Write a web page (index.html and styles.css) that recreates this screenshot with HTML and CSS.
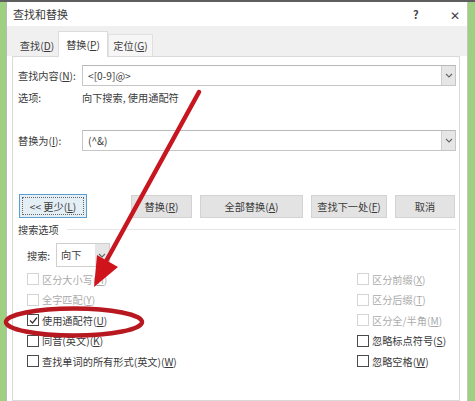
FILE: index.html
```html
<!DOCTYPE html>
<html>
<head>
<meta charset="utf-8">
<link rel="stylesheet" href="styles.css">
</head>
<body>
<div class="screen">
  <div class="dialog">
    <div class="titlebar">
      <span class="title">查找和替换</span>
      <span class="help">?</span>
      <span class="close">✕</span>
    </div>
    <div class="tabstrip">
      <div class="tab first">查找(<u>D</u>)</div>
      <div class="tab active">替换(<u>P</u>)</div>
      <div class="tab third">定位(<u>G</u>)</div>
    </div>
    <div class="panel">
      <div class="row field-row">
        <span class="label">查找内容(<u>N</u>):</span>
        <div class="combo">
          <span class="combo-text">&lt;[0-9]@&gt;</span>
          <span class="combo-btn"><svg width="8" height="5" viewBox="0 0 8 5"><path d="M1 1 L4 4 L7 1" fill="none" stroke="#666" stroke-width="1.1"/></svg></span>
        </div>
      </div>
      <div class="row opt-row">
        <span class="label">选项:</span>
        <span class="opt-value">向下搜索, 使用通配符</span>
      </div>
      <div class="row field-row replace-row">
        <span class="label">替换为(<u>I</u>):</span>
        <div class="combo">
          <span class="combo-text">(^&amp;)</span>
          <span class="combo-btn"><svg width="8" height="5" viewBox="0 0 8 5"><path d="M1 1 L4 4 L7 1" fill="none" stroke="#666" stroke-width="1.1"/></svg></span>
        </div>
      </div>
      <div class="buttons">
        <div class="btn btn-less"><span class="focus">&lt;&lt; 更少(<u>L</u>)</span></div>
        <div class="btn btn-replace">替换(<u>R</u>)</div>
        <div class="btn btn-all">全部替换(<u>A</u>)</div>
        <div class="btn btn-next">查找下一处(<u>F</u>)</div>
        <div class="btn btn-cancel">取消</div>
      </div>
      <div class="section">
        <span class="section-label">搜索选项</span>
        <span class="section-line"></span>
      </div>
      <div class="search-row">
        <span class="search-label">搜索:</span>
        <div class="select">
          <span class="select-text">向下</span>
          <span class="select-btn"><svg width="8" height="5" viewBox="0 0 8 5"><path d="M1 1 L4 4 L7 1" fill="none" stroke="#666" stroke-width="1.1"/></svg></span>
        </div>
      </div>
      <div class="checks">
        <div class="check disabled"><span class="box"></span><span>区分大小写(<u>H</u>)</span></div>
        <div class="check disabled"><span class="box"></span><span>区分前缀(<u>X</u>)</span></div>
        <div class="check disabled"><span class="box"></span><span>全字匹配(<u>Y</u>)</span></div>
        <div class="check disabled"><span class="box"></span><span>区分后缀(<u>T</u>)</span></div>
        <div class="check"><span class="box checked"><svg width="9" height="9" viewBox="0 0 9 9"><path d="M1 4.5 L3.5 7 L8 1.5" fill="none" stroke="#333" stroke-width="1.2"/></svg></span><span>使用通配符(<u>U</u>)</span></div>
        <div class="check disabled"><span class="box"></span><span>区分全/半角(<u>M</u>)</span></div>
        <div class="check"><span class="box"></span><span>同音(英文)(<u>K</u>)</span></div>
        <div class="check"><span class="box"></span><span>忽略标点符号(<u>S</u>)</span></div>
        <div class="check"><span class="box"></span><span>查找单词的所有形式(英文)(<u>W</u>)</span></div>
        <div class="check"><span class="box"></span><span>忽略空格(<u>W</u>)</span></div>
      </div>
    </div>
  </div>
  <svg class="overlay" width="475" height="401" viewBox="0 0 475 401">
    <path d="M199 92 L104 265" stroke="#c7161f" stroke-width="4.5" stroke-linecap="round" fill="none"/>
    <polygon points="94,287 97,255 118,267" fill="#d0141c"/>
    <ellipse cx="74" cy="322" rx="68" ry="13.5" fill="none" stroke="#b8181f" stroke-width="4.5"/>
  </svg>
</div>
</body>
</html>
```

FILE: styles.css
```css
* { box-sizing: border-box; }
html, body { margin: 0; padding: 0; }
body {
  font-family: "Noto Sans CJK SC", "Noto Sans", sans-serif;
  font-size: 10.2px;
  color: #3a3a3a;
}
u { text-decoration: underline; text-underline-offset: 1px; }

.screen {
  position: relative;
  width: 475px;
  height: 401px;
  background: #9fcf80;
  border-top: 2px solid #5e5e5e;
  overflow: hidden;
}
.dialog {
  margin-left: 6px;
  width: 462px;
  height: 399px;
  background: #fff;
  border-left: 1px solid #b8b8b8;
  border-right: 1px solid #c4c4c4;
  display: flex;
  flex-direction: column;
}
.titlebar {
  height: 24px;
  display: flex;
  align-items: center;
  padding-left: 6px;
  flex-shrink: 0;
}
.title { font-size: 11px; color: #3a3a3a; flex: 1; }
.help { font-size: 11px; font-weight: bold; color: #444; width: 37px; }
.close { font-size: 12px; color: #444; width: 17px; }

.tabstrip {
  height: 30px;
  background: #f0f0f0;
  display: flex;
  align-items: flex-end;
  padding-left: 6px;
  flex-shrink: 0;
}
.tab {
  height: 22px;
  display: flex;
  align-items: center;
  justify-content: center;
}
.tab.first { width: 45px; padding-left: 3px; }
.tab.active {
  width: 50px;
  height: 26px;
  background: #fff;
  border: 1px solid #dcdcdc;
  border-bottom: none;
  margin-bottom: -1px;
  position: relative;
}
.tab.third {
  width: 45px;
  background: #f6f6f6;
  border: 1px solid #e0e0e0;
  border-bottom: none;
}

.panel {
  flex: 1;
  margin: 0 7px 0 5px;
  border: 1px solid #d9d9d9;
  padding: 0 3px 0 5px;
}
.row { display: flex; align-items: center; }
.label { width: 64px; flex-shrink: 0; }
.field-row { margin-top: 8px; height: 21px; }
.replace-row { margin-top: 25px; }
.opt-row { margin-top: 4px; height: 15px; }

.combo {
  flex: 1;
  height: 21px;
  display: flex;
  border: 1px solid #c6c6c6;
  border-top-color: #b8b8b8;
  background: #fff;
}
.combo-text { flex: 1; padding-left: 5px; line-height: 19px; }
.combo-btn {
  width: 14px;
  background: #e6e6e6;
  border-left: 1px solid #cfcfcf;
  display: flex;
  align-items: center;
  justify-content: center;
}

.buttons {
  display: flex;
  margin-top: 43px;
  padding-left: 1px;
  height: 24px;
}
.btn {
  height: 23px;
  background: #e3e3e3;
  border: 1px solid #d3d3d3;
  display: flex;
  align-items: center;
  justify-content: center;
  margin-top: 1px;
}
.btn-less {
  width: 68px;
  height: 24px;
  margin-top: 0;
  border: 1px solid #5a9fd0;
  background: #e4eef5;
  padding: 2px;
}
.focus {
  width: 100%;
  height: 100%;
  border: 1px dotted #666;
  display: flex;
  align-items: center;
  justify-content: center;
}
.btn-replace { width: 61px; margin-left: 44px; }
.btn-all { width: 103px; margin-left: 8px; }
.btn-next { width: 76px; margin-left: 8px; }
.btn-cancel { width: 60px; margin-left: 8px; }

.section {
  display: flex;
  align-items: center;
  margin-top: 4px;
  height: 14px;
}
.section-line {
  flex: 1;
  height: 1px;
  background: #e6e6e6;
  margin-left: 8px;
}

.search-row {
  display: flex;
  align-items: center;
  margin-top: 7px;
  padding-left: 9px;
  height: 24px;
}
.search-label { width: 29px; }
.select {
  width: 54px;
  height: 24px;
  display: flex;
  border: 1px solid #cfcfcf;
  background: #fff;
}
.select-text { flex: 1; padding-left: 4px; line-height: 22px; }
.select-btn {
  width: 14px;
  background: #e6e6e6;
  display: flex;
  align-items: center;
  justify-content: center;
}

.checks {
  display: grid;
  grid-template-columns: 330px 1fr;
  grid-auto-rows: 20.5px;
  padding-left: 9px;
  margin-top: 2px;
}
.check {
  display: flex;
  align-items: center;
}
.check.disabled { color: #ababab; }
.box {
  width: 12px;
  height: 12px;
  border: 1px solid #4a4a4a;
  margin-right: 3px;
  display: flex;
  align-items: center;
  justify-content: center;
  background: #fff;
}
.check.disabled .box { border-color: #d4d4d4; }

.overlay {
  position: absolute;
  left: 0;
  top: -2px;
  pointer-events: none;
}
```
